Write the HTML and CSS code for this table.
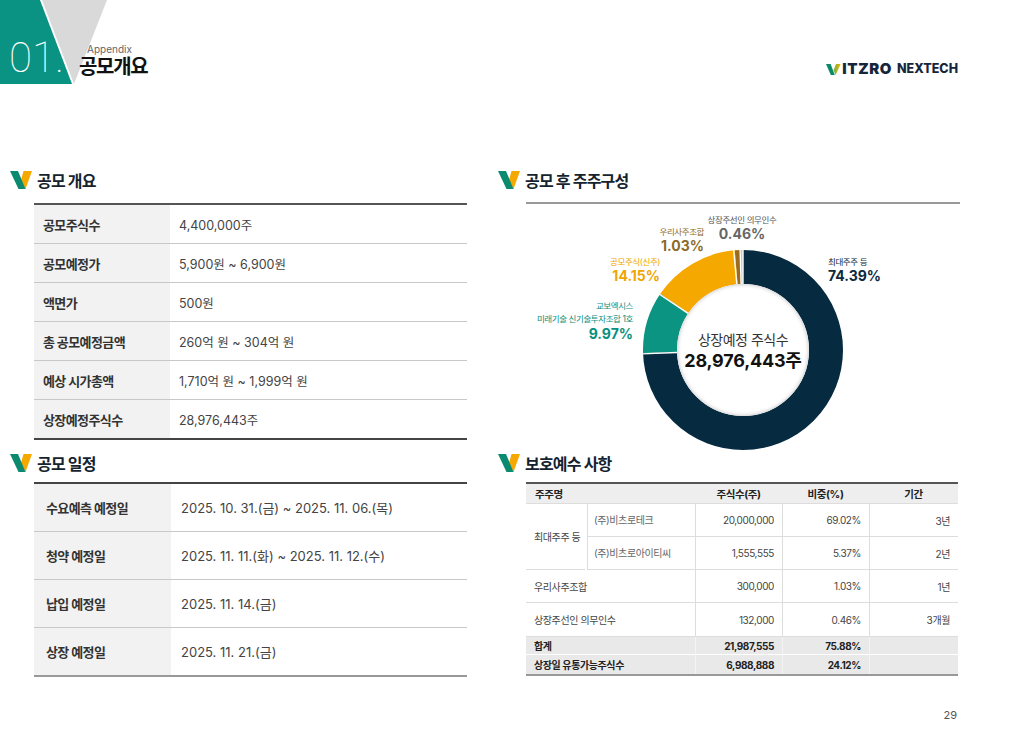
FILE: index.html
```html
<!DOCTYPE html>
<html lang="ko">
<head>
<meta charset="utf-8">
<title>공모개요</title>
<link rel="stylesheet" href="styles.css">
</head>
<body>
<div class="page">
  <header class="top">
    <div class="mark">
      <svg class="mark-bg" width="110" height="84" viewBox="0 0 110 84">
        <polygon points="0,0 40,0 72,84 0,84" fill="#0a9282"/>
        <polygon points="42,0 107,0 74,84" fill="#d9d9d9"/>
      </svg>
      <span class="big-num">01.</span>
    </div>
    <div class="heading">
      <div class="sub">Appendix</div>
      <h1>공모개요</h1>
    </div>
    <div class="logo">
      <svg class="logo-v" width="15" height="11" viewBox="0 0 15 11">
        <defs>
          <linearGradient id="lg" x1="0" y1="0" x2="1" y2="0">
            <stop offset="0" stop-color="#6fb43f"/>
            <stop offset="1" stop-color="#f2b000"/>
          </linearGradient>
        </defs>
        <polygon points="0,0 4.6,0 8.8,11 4.8,11" fill="#0a8a68"/>
        <polygon points="10,0 14.6,0 9.6,11 7.6,6.2" fill="url(#lg)"/>
      </svg>
      <span class="logo-main">ITZRO</span>
      <span class="logo-sub">NEXTECH</span>
    </div>
  </header>

  <main class="main">
    <section class="col">
      <div class="sec-title">
        <svg class="v-icon" width="22" height="18" viewBox="0 0 22 18">
          <polygon points="13.5,0 22,0 15.5,18 11,9" fill="#f5a800"/>
          <polygon points="0,0 8,0 15.5,18 8.5,18" fill="#0b8a70"/>
        </svg>
        <h2>공모 개요</h2>
      </div>
      <div class="kv">
        <div class="kv-row"><div class="kv-label">공모주식수</div><div class="kv-val">4,400,000주</div></div>
        <div class="kv-row"><div class="kv-label">공모예정가</div><div class="kv-val">5,900원 ~ 6,900원</div></div>
        <div class="kv-row"><div class="kv-label">액면가</div><div class="kv-val">500원</div></div>
        <div class="kv-row"><div class="kv-label">총 공모예정금액</div><div class="kv-val">260억 원 ~ 304억 원</div></div>
        <div class="kv-row"><div class="kv-label">예상 시가총액</div><div class="kv-val">1,710억 원 ~ 1,999억 원</div></div>
        <div class="kv-row"><div class="kv-label">상장예정주식수</div><div class="kv-val">28,976,443주</div></div>
      </div>

      <div class="sec-title second">
        <svg class="v-icon" width="22" height="18" viewBox="0 0 22 18">
          <polygon points="13.5,0 22,0 15.5,18 11,9" fill="#f5a800"/>
          <polygon points="0,0 8,0 15.5,18 8.5,18" fill="#0b8a70"/>
        </svg>
        <h2>공모 일정</h2>
      </div>
      <div class="sched">
        <div class="sched-row"><div class="sched-label">수요예측 예정일</div><div class="sched-val">2025. 10. 31.(금) ~ 2025. 11. 06.(목)</div></div>
        <div class="sched-row"><div class="sched-label">청약 예정일</div><div class="sched-val">2025. 11. 11.(화) ~ 2025. 11. 12.(수)</div></div>
        <div class="sched-row"><div class="sched-label">납입 예정일</div><div class="sched-val">2025. 11. 14.(금)</div></div>
        <div class="sched-row"><div class="sched-label">상장 예정일</div><div class="sched-val">2025. 11. 21.(금)</div></div>
      </div>
    </section>

    <section class="col">
      <div class="sec-title">
        <svg class="v-icon" width="22" height="18" viewBox="0 0 22 18">
          <polygon points="13.5,0 22,0 15.5,18 11,9" fill="#f5a800"/>
          <polygon points="0,0 8,0 15.5,18 8.5,18" fill="#0b8a70"/>
        </svg>
        <h2>공모 후 주주구성</h2>
      </div>
      <div class="sec-line"></div>
      <div class="chart">
        <div class="donut">
          <svg width="200" height="200" viewBox="0 0 200 200">
            <g transform="rotate(-90 100 100)" fill="none" stroke-width="34">
              <circle cx="100" cy="100" r="83" stroke="#062a40" stroke-dasharray="387.94 521.5"/>
              <circle cx="100" cy="100" r="83" stroke="#0a9481" stroke-dasharray="51.99 521.5" stroke-dashoffset="-387.94"/>
              <circle cx="100" cy="100" r="83" stroke="#f5a800" stroke-dasharray="73.79 521.5" stroke-dashoffset="-439.93"/>
              <circle cx="100" cy="100" r="83" stroke="#9b6b1e" stroke-dasharray="5.37 521.5" stroke-dashoffset="-513.72"/>
              <circle cx="100" cy="100" r="83" stroke="#bdbdbd" stroke-dasharray="2.41 521.5" stroke-dashoffset="-519.09"/>
            </g>
            <g stroke="#fff" stroke-width="1.4">
              <line x1="100" y1="-1" x2="100" y2="35"/>
              <line x1="34.05" y1="102.53" x2="-1" y2="103.9"/>
              <line x1="45.09" y1="63.38" x2="16" y2="44"/>
              <line x1="93.84" y1="34.29" x2="90.6" y2="-1"/>
              <line x1="98.09" y1="34.03" x2="97.1" y2="-1"/>
            </g>
          </svg>
          <div class="donut-center">
            <div class="dc-label">상장예정 주식수</div>
            <div class="dc-value">28,976,443주</div>
          </div>
        </div>
        <div class="lbl lbl-gray"><div class="lbl-t">상장주선인 의무인수</div><div class="lbl-v">0.46%</div></div>
        <div class="lbl lbl-brown"><div class="lbl-t">우리사주조합</div><div class="lbl-v">1.03%</div></div>
        <div class="lbl lbl-yellow"><div class="lbl-t">공모주식(신주)</div><div class="lbl-v">14.15%</div></div>
        <div class="lbl lbl-teal"><div class="lbl-t">교보엑시스</div><div class="lbl-t">미래기술 신기술투자조합 1호</div><div class="lbl-v">9.97%</div></div>
        <div class="lbl lbl-navy"><div class="lbl-t">최대주주 등</div><div class="lbl-v">74.39%</div></div>
      </div>

      <div class="sec-title">
        <svg class="v-icon" width="22" height="18" viewBox="0 0 22 18">
          <polygon points="13.5,0 22,0 15.5,18 11,9" fill="#f5a800"/>
          <polygon points="0,0 8,0 15.5,18 8.5,18" fill="#0b8a70"/>
        </svg>
        <h2>보호예수 사항</h2>
      </div>
      <div class="lock">
        <div class="c th th-name span2">주주명</div>
        <div class="c th center">주식수(주)</div>
        <div class="c th center">비중(%)</div>
        <div class="c th center">기간</div>

        <div class="c name rows2">최대주주 등</div>
        <div class="c sub vl">(주)비츠로테크</div>
        <div class="c amt vl">20,000,000</div>
        <div class="c amt vl">69.02%</div>
        <div class="c amt vl">3년</div>

        <div class="c sub vl">(주)비츠로아이티씨</div>
        <div class="c amt vl">1,555,555</div>
        <div class="c amt vl">5.37%</div>
        <div class="c amt vl">2년</div>

        <div class="c name span2">우리사주조합</div>
        <div class="c amt vl">300,000</div>
        <div class="c amt vl">1.03%</div>
        <div class="c amt vl">1년</div>

        <div class="c name span2">상장주선인 의무인수</div>
        <div class="c amt vl">132,000</div>
        <div class="c amt vl">0.46%</div>
        <div class="c amt vl">3개월</div>

        <div class="c tot name span2">합계</div>
        <div class="c tot amt">21,987,555</div>
        <div class="c tot amt">75.88%</div>
        <div class="c tot amt"></div>

        <div class="c tot last name span2">상장일 유통가능주식수</div>
        <div class="c tot last amt">6,988,888</div>
        <div class="c tot last amt">24.12%</div>
        <div class="c tot last amt"></div>
      </div>
    </section>
  </main>

  <footer class="footer">29</footer>
</div>
</body>
</html>
```

FILE: styles.css
```css
* { box-sizing: border-box; margin: 0; padding: 0; }

body {
  width: 1011px;
  height: 741px;
  overflow: hidden;
  background: #fff;
  font-family: "Inter", "Noto Sans CJK KR", sans-serif;
  color: #333;
}

.page { width: 1011px; height: 741px; }

/* header */
.top { display: flex; height: 84px; }
.mark { position: relative; width: 79px; height: 84px; }
.mark-bg { position: absolute; left: 0; top: 0; }
.big-num {
  position: absolute;
  left: 9px;
  top: 37px;
  font-family: "Roboto", sans-serif;
  font-weight: 100;
  font-size: 42px;
  line-height: 42px;
  color: #fff;
}
.heading { position: relative; padding-top: 43px; }
.sub { font-size: 10px; line-height: 12px; color: #666; margin-left: 2px; }
.heading h1 {
  font-size: 20px;
  line-height: 24px;
  font-weight: 700;
  letter-spacing: -1.3px;
  color: #111;
}
.logo {
  margin-left: auto;
  margin-right: 53px;
  margin-top: 62px;
  height: 14px;
  display: flex;
  align-items: center;
}
.logo-v { margin-right: 1px; }
.logo-main {
  font-size: 15px;
  font-weight: 900;
  letter-spacing: 0.6px;
  color: #16263a;
  line-height: 14px;
}
.logo-sub {
  margin-left: 5px;
  font-size: 12.5px;
  font-weight: 800;
  color: #16263a;
  line-height: 14px;
}

/* main layout */
.main {
  display: grid;
  grid-template-columns: 457px 462px;
  column-gap: 31px;
  padding: 86px 0 0 10px;
}

.sec-title { display: flex; align-items: center; gap: 5px; height: 20px; }
.sec-title h2 {
  font-size: 16px;
  font-weight: 700;
  letter-spacing: -0.8px;
  color: #15232f;
}
.sec-title.second { margin-top: 13px; }

/* key-value table */
.kv { margin: 13px 0 0 24px; border-top: 2px solid #555; }
.kv-row {
  display: grid;
  grid-template-columns: 136px 1fr;
  height: 39px;
  border-bottom: 1px solid #c8c8c8;
}
.kv-row:last-child { border-bottom: 2px solid #444; height: 40px; }
.kv-label {
  background: #f2f2f2;
  display: flex;
  align-items: center;
  padding-left: 9px;
  font-size: 13px;
  font-weight: 700;
  letter-spacing: -0.6px;
  color: #333;
}
.kv-val {
  display: flex;
  align-items: center;
  padding-left: 9px;
  font-size: 12.5px;
  color: #444;
}

/* schedule table */
.sched { margin: 9px 0 0 24px; border-top: 2px solid #444; }
.sched-row {
  display: grid;
  grid-template-columns: 137px 1fr;
  height: 48px;
  border-bottom: 1px solid #c8c8c8;
}
.sched-row:last-child { border-bottom: 2px solid #999; height: 49px; }
.sched-label {
  background: #f2f2f2;
  display: flex;
  align-items: center;
  padding-left: 12px;
  font-size: 13px;
  font-weight: 700;
  letter-spacing: -0.6px;
  color: #333;
}
.sched-val {
  display: flex;
  align-items: center;
  padding-left: 10px;
  font-size: 13px;
  color: #444;
}

/* chart */
.sec-line { margin: 12px 0 0 28px; border-top: 2px solid #999; }
.chart {
  position: relative;
  margin-left: 28px;
  height: 249px;
  padding-top: 46px;
  display: flex;
  justify-content: center;
}
.donut { position: relative; width: 200px; height: 200px; }
.donut svg { display: block; overflow: visible; }
.donut-center {
  position: absolute;
  left: 34px;
  top: 34px;
  width: 132px;
  height: 132px;
  border-radius: 50%;
  background: #fff;
  box-shadow: inset 0 0 4px rgba(0, 0, 0, 0.28);
  display: flex;
  flex-direction: column;
  align-items: center;
  justify-content: center;
  padding-top: 2px;
}
.dc-label { font-size: 14px; line-height: 20px; letter-spacing: -0.5px; color: #333; }
.dc-value { font-size: 18px; line-height: 22px; font-weight: 700; color: #111; letter-spacing: -0.2px; }

.lbl { position: absolute; line-height: 12px; }
.lbl-t { font-size: 8.5px; letter-spacing: -0.4px; line-height: 12px; white-space: nowrap; }
.lbl-v { font-size: 14px; font-weight: 700; line-height: 16px; }
.lbl-gray { left: 216px; top: 10px; transform: translateX(-50%); text-align: center; color: #555; }
.lbl-gray .lbl-v { color: #666; }
.lbl-brown { right: 256px; top: 22px; text-align: right; color: #8c6a28; }
.lbl-yellow { right: 300px; top: 52px; text-align: right; color: #f0a500; }
.lbl-teal { right: 327px; top: 96px; text-align: right; color: #0a9080; }
.lbl-teal .lbl-t { line-height: 13px; }
.lbl-navy { left: 302px; top: 52px; color: #0b2a40; }

/* lock-up table */
.lock {
  margin: 9px 0 0 28px;
  width: 432px;
  display: grid;
  grid-template-columns: 59px 110px 87px 87px 89px;
  grid-template-rows: 20px 33px 33px 33px 34px 18px 19px;
  border-top: 2px solid #555;
  border-bottom: 2px solid #999;
  font-size: 10px;
  letter-spacing: -0.4px;
  color: #444;
}
.c { display: flex; align-items: center; padding: 0 8px; border-bottom: 1px solid #ddd; white-space: nowrap; }
.th { background: #eeeeee; font-weight: 700; font-size: 10.5px; color: #222; border-bottom: 1px solid #ddd; }
.th-name { padding-left: 9px; }
.center { justify-content: center; }
.span2 { grid-column: span 2; }
.rows2 { grid-row: span 2; }
.vl { border-left: 1px solid #ddd; }
.sub { padding-left: 6px; }
.amt { justify-content: flex-end; padding-right: 8px; }
.name { padding-left: 8px; }
.tot { background: #e9e9e9; font-weight: 700; color: #222; border-bottom: 1px solid #fff; }
.tot.amt { border-left: 1px solid #f4f4f4; }
.tot.last { border-bottom: none; }

.footer {
  margin-top: 31px;
  padding-right: 54px;
  text-align: right;
  font-size: 11px;
  line-height: 14px;
  color: #555;
}
```
